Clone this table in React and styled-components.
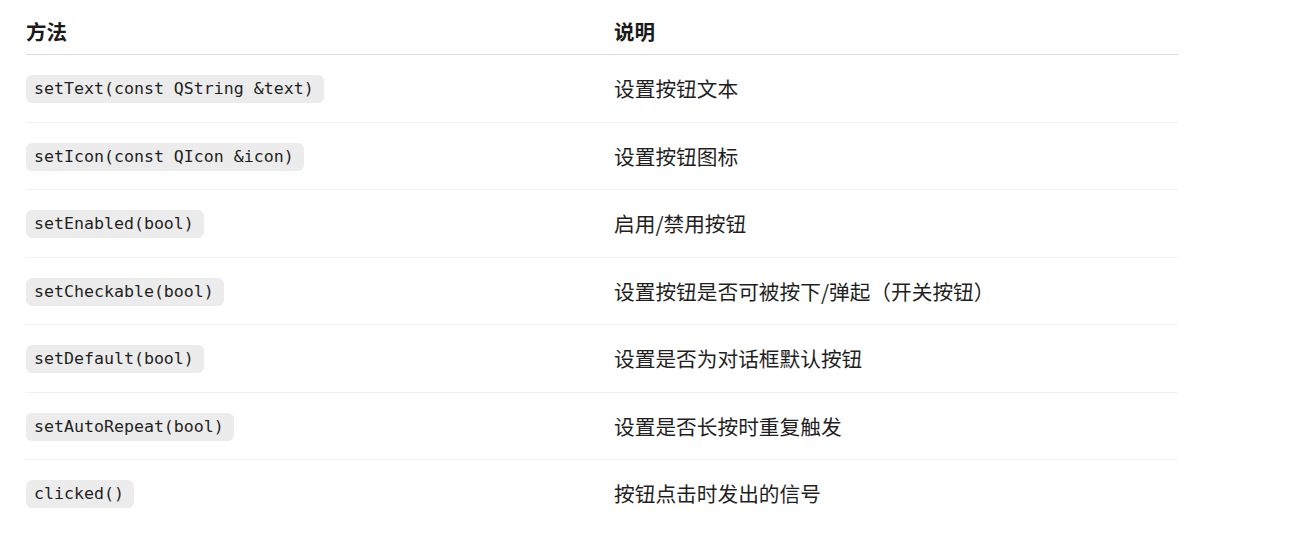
import React from "react";
import styled, { createGlobalStyle } from "styled-components";

const Global = createGlobalStyle`
  html, body { margin: 0; padding: 0; background: #ffffff; }
  body {
    font-family: "Noto Sans CJK SC", "Noto Sans", sans-serif;
    color: #1f1f1f;
  }
`;

const Page = styled.div`
  padding: 8px 0 0 26px;
`;

const Table = styled.div`
  width: 1152px;
  display: grid;
  grid-template-columns: 588px 564px;
`;

const HeadCell = styled.div`
  height: 46px;
  display: flex;
  align-items: center;
  font-size: 20.5px;
  font-weight: 700;
  color: #1a1a1a;
  border-bottom: 1px solid #d9d9d9;
`;

const Cell = styled.div`
  height: 66.5px;
  display: flex;
  align-items: center;
  font-size: 20.7px;
  color: #1f1f1f;
  border-bottom: 1px solid ${(p) => (p.$last ? "transparent" : "#f0f0f0")};
`;

const Code = styled.code`
  display: inline-block;
  margin-top: 2px;
  font-family: "DejaVu Sans Mono", "Liberation Mono", monospace;
  font-size: 16.6px;
  line-height: 28px;
  height: 28px;
  padding: 0 10px 0 8px;
  background: #ececec;
  border-radius: 6px;
  color: #1f1f1f;
  white-space: pre;
`;

const rows = [
  ["setText(const QString &text)", "设置按钮文本"],
  ["setIcon(const QIcon &icon)", "设置按钮图标"],
  ["setEnabled(bool)", "启用/禁用按钮"],
  ["setCheckable(bool)", "设置按钮是否可被按下/弹起（开关按钮）"],
  ["setDefault(bool)", "设置是否为对话框默认按钮"],
  ["setAutoRepeat(bool)", "设置是否长按时重复触发"],
  ["clicked()", "按钮点击时发出的信号"],
];

export default function App() {
  return (
    <>
      <Global />
      <Page>
        <Table>
          <HeadCell>方法</HeadCell>
          <HeadCell>说明</HeadCell>
          {rows.map(([m, d], i) => (
            <React.Fragment key={m}>
              <Cell $last={i === rows.length - 1}>
                <Code>{m}</Code>
              </Cell>
              <Cell $last={i === rows.length - 1}>{d}</Cell>
            </React.Fragment>
          ))}
        </Table>
      </Page>
    </>
  );
}
